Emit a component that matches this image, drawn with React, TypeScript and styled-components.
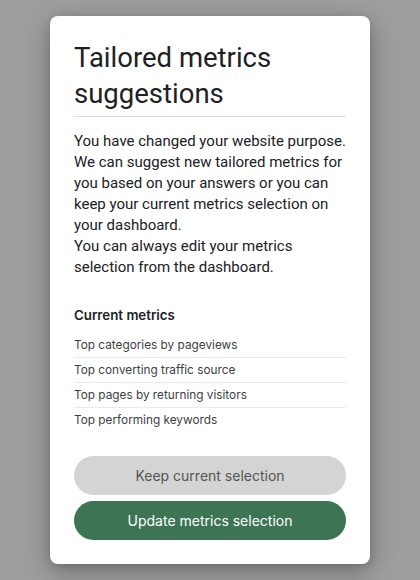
import React from "react";
import styled, { createGlobalStyle } from "styled-components";

const Global = createGlobalStyle`
  html, body { margin: 0; padding: 0; }
  body {
    background: #9e9e9e;
    font-family: Roboto, "Noto Sans", Arial, sans-serif;
    width: 420px;
    height: 580px;
    overflow: hidden;
  }
`;

const Page = styled.div`
  display: flex;
  justify-content: center;
  padding-top: 16px;
`;

const Dialog = styled.div`
  width: 320px;
  box-sizing: border-box;
  background: #fff;
  border-radius: 8px;
  padding: 24px 24px 24px;
  box-shadow: 0 8px 28px rgba(0, 0, 0, 0.28), 0 2px 8px rgba(0, 0, 0, 0.14);
  display: flex;
  flex-direction: column;
`;

const Title = styled.h1`
  margin: 0;
  font-family: Roboto, "Open Sans", sans-serif;
  font-weight: 400;
  font-size: 27.5px;
  line-height: 36px;
  color: #202124;
  padding-bottom: 4px;
  border-bottom: 1px solid #dadce0;
`;

const Body = styled.p`
  margin: 14px 0 0;
  font-size: 15px;
  line-height: 21px;
  color: #202124;
`;

const SectionTitle = styled.h2`
  margin: 28px 0 9px;
  font-family: Inter, Roboto, sans-serif;
  font-size: 13.3px;
  line-height: 18px;
  font-weight: 600;
  color: #202124;
`;

const List = styled.ul`
  list-style: none;
  margin: 0;
  padding: 0;
`;

const Item = styled.li`
  font-family: Inter, Roboto, sans-serif;
  font-size: 11.8px;
  line-height: 24px;
  color: #3c4043;
  border-bottom: 1px solid #ebebeb;
  &:last-child { border-bottom: none; }
`;

const Actions = styled.div`
  display: flex;
  flex-direction: column;
  gap: 6px;
  margin-top: 24px;
`;

const Button = styled.button<{ $primary?: boolean }>`
  height: 39px;
  border: none;
  border-radius: 20px;
  font-family: Inter, Roboto, sans-serif;
  font-size: 14px;
  cursor: pointer;
  background: ${(p) => (p.$primary ? "#3d7453" : "#d4d4d4")};
  color: ${(p) => (p.$primary ? "#ffffff" : "#555555")};
`;

const metrics = [
  "Top categories by pageviews",
  "Top converting traffic source",
  "Top pages by returning visitors",
  "Top performing keywords",
];

export default function App() {
  return (
    <>
      <Global />
      <Page>
        <Dialog>
          <Title>Tailored metrics suggestions</Title>
          <Body>
            You have changed your website purpose. We can suggest new tailored
            metrics for you based on your answers or you can keep your current
            metrics selection on your dashboard.
            <br />
            You can always edit your metrics selection from the dashboard.
          </Body>
          <SectionTitle>Current metrics</SectionTitle>
          <List>
            {metrics.map((m) => (
              <Item key={m}>{m}</Item>
            ))}
          </List>
          <Actions>
            <Button>Keep current selection</Button>
            <Button $primary>Update metrics selection</Button>
          </Actions>
        </Dialog>
      </Page>
    </>
  );
}
